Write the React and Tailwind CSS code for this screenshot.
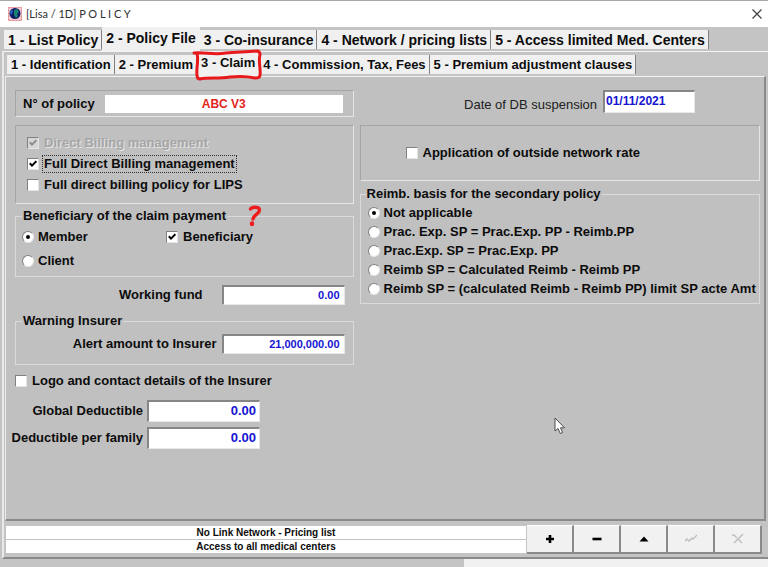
import React from "react";

const mainTabs = [
  "1 - List Policy",
  "2 - Policy File",
  "3 - Co-insurance",
  "4 - Network / pricing lists",
  "5 - Access limited Med. Centers",
];

const subTabs = [
  "1 - Identification",
  "2 - Premium",
  "3 - Claim",
  "4 - Commission, Tax, Fees",
  "5 - Premium adjustment clauses",
];

const secondaryBasis = [
  "Not applicable",
  "Prac. Exp. SP = Prac.Exp. PP - Reimb.PP",
  "Prac.Exp. SP = Prac.Exp. PP",
  "Reimb SP = Calculated Reimb - Reimb PP",
  "Reimb SP = (calculated Reimb - Reimb PP) limit SP acte Amt",
];

function Tab({ label, active, size, children }) {
  return (
    <button
      type="button"
      role="tab"
      aria-selected={active}
      className={`relative flex shrink-0 justify-center whitespace-nowrap bg-[#f0f0f0] px-1 font-bold ${size} ${
        active ? "h-6 items-start pt-[3px]" : "mb-[2px] h-[19px] items-center border-r border-[#808080] pr-[3px]"
      }`}
    >
      {label}
      {children}
    </button>
  );
}

function CheckBox({ label, defaultChecked, disabled, focused }) {
  return (
    <label
      className={`flex w-fit items-center gap-1 whitespace-nowrap ${
        disabled ? "text-[#a6a6a6] [text-shadow:1px_1px_0_#e6e6e6]" : ""
      }`}
    >
      <span className="grid shrink-0 place-items-center">
        <input
          type="checkbox"
          defaultChecked={defaultChecked}
          disabled={disabled}
          className="peer col-start-1 row-start-1 size-3 appearance-none border border-t-[#808080] border-r-[#e4e4e4] border-b-[#e4e4e4] border-l-[#808080] bg-white disabled:bg-[#d6d6d6]"
        />
        <svg
          viewBox="0 0 8 8"
          className="pointer-events-none invisible col-start-1 row-start-1 size-2 peer-checked:visible"
          fill="none"
          stroke={disabled ? "#8c8c8c" : "#000"}
          strokeWidth="2"
        >
          <path d="M0.8 3.2 L3 5.6 L7.4 1.2" />
        </svg>
      </span>
      <span className={focused ? "px-px outline outline-dotted outline-[#303030]" : "px-px"}>{label}</span>
    </label>
  );
}

function Radio({ label, name, defaultChecked }) {
  return (
    <label className="flex w-fit items-center gap-1 whitespace-nowrap">
      <span className="grid shrink-0 place-items-center">
        <input
          type="radio"
          name={name}
          defaultChecked={defaultChecked}
          className="peer col-start-1 row-start-1 size-3 appearance-none rounded-full border border-t-[#808080] border-r-[#e8e8e8] border-b-[#e8e8e8] border-l-[#808080] bg-white"
        />
        <span className="pointer-events-none invisible col-start-1 row-start-1 size-1 rounded-full bg-black peer-checked:visible" />
      </span>
      <span>{label}</span>
    </label>
  );
}

const field =
  "border-t-2 border-l-2 border-r border-b border-t-[#868686] border-l-[#868686] border-r-[#e8e8e8] border-b-[#e8e8e8] bg-white font-bold text-[#1414d2] outline-none";
const box = "border border-t-[#a4a4a4] border-l-[#a4a4a4] border-r-[#e6e6e6] border-b-[#e6e6e6]";
const group = "min-w-0 border border-[#dadada]";

function ToolButton({ label, disabled, children }) {
  return (
    <button
      type="button"
      aria-label={label}
      disabled={disabled}
      className="flex h-[29px] w-[47px] items-center justify-center border-t border-r-2 border-b-2 border-t-white border-r-[#8a8a8a] border-b-[#8a8a8a] bg-[#f1f1f1]"
    >
      <svg viewBox="0 0 14 14" className="size-[14px]" fill="none">
        {children}
      </svg>
    </button>
  );
}

export default function App() {
  return (
    <div className="flex min-h-screen flex-col overflow-x-hidden bg-[#c4c4c4] font-['Liberation_Sans',Arial,sans-serif] text-[13px] font-bold leading-4 text-[#0c0c0c]">
      <header className="flex h-[27px] items-center border-t border-[#a8a8a8] bg-white pr-[5px] pl-2">
        <svg viewBox="0 0 14 14" className="size-[14px]">
          <rect width="14" height="14" fill="#f1c9cd" />
          <rect x="0.5" y="0.5" width="13" height="13" fill="none" stroke="#df8790" strokeDasharray="2 1" />
          <circle cx="7" cy="6.5" r="5.5" fill="#101b68" />
          <path d="M6 3 L9 2 L11 5 L9 7 L10 9 L8 11 L6 8 Z" fill="#16866f" />
          <path d="M2 5 L4 2 L5 5 L3 8 Z" fill="#2563c4" />
        </svg>
        <h1 className="ml-1 flex-1 whitespace-pre font-['Lato','Open_Sans',sans-serif] text-[11px] font-normal text-[#303030]">
          [Lisa / 1D] P O L I C Y
        </h1>
        <button type="button" aria-label="Close">
          <svg viewBox="0 0 12 12" className="size-3" stroke="#404040" strokeWidth="1.2">
            <path d="M1.5 1.5 L10.5 10.5 M10.5 1.5 L1.5 10.5" />
          </svg>
        </button>
      </header>

      <div role="tablist" aria-label="Policy" className="flex h-6 items-end pl-1">
        {mainTabs.map((t, i) => (
          <Tab key={t} label={t} active={i === 1} size="text-[14px]" />
        ))}
      </div>

      <main className="ml-[2px] flex flex-1 flex-col border-t border-b-2 border-l-2 border-t-[#f4f4f4] border-b-[#8a8a8a] border-l-[#e8e8e8]">
        <div role="tablist" aria-label="Policy file" className="flex h-6 items-end pl-[3px]">
          {subTabs.map((t, i) => (
            <Tab key={t} label={t} active={i === 2} size="text-[13px]">
              {i === 2 && (
                <svg
                  viewBox="0 0 72 32"
                  className="pointer-events-none absolute -top-[3px] -left-[5px] z-10 h-8 w-[72px]"
                  fill="none"
                  stroke="#e8191c"
                  strokeWidth="3"
                  strokeLinejoin="round"
                  strokeLinecap="round"
                >
                  <path d="M2 4 C12 3 22 6 34 4 C46 3 56 3 65 2 Q68 2 68 6 C66 12 69 20 68 26 Q68 29 63 29 C54 27 48 27 38 28 C26 30 16 28 8 30 Q5 30 5 26 C4 20 7 10 5 5" />
                </svg>
              )}
            </Tab>
          ))}
        </div>

        <div className="relative mr-[2px] ml-px flex-1 border-t border-r-2 border-b-2 border-l border-t-[#f4f4f4] border-r-[#8a8a8a] border-b-[#8a8a8a] border-l-[#e8e8e8] bg-[#c0c0c0] pt-[13px] pr-1 pb-4 pl-[9px]">
          <div className="grid grid-cols-[339fr_401fr] items-start gap-[6px]">
            <section>
              <div className={`${box} flex h-[27px] items-center pr-[10px] pl-[7px]`}>
                <label htmlFor="policy" className="w-[82px] whitespace-nowrap">
                  N° of policy
                </label>
                <input
                  id="policy"
                  defaultValue="ABC V3"
                  className="h-[18px] min-w-0 flex-1 bg-white text-center text-[12px] font-bold text-[#e2261c] outline-none"
                />
              </div>

              <div className={`${box} mt-2 grid auto-rows-[21px] items-center pt-[6px] pb-2 pl-[11px]`}>
                <CheckBox label="Direct Billing management" defaultChecked disabled />
                <CheckBox label="Full Direct Billing management" defaultChecked focused />
                <CheckBox label="Full direct billing policy for LIPS" />
              </div>

              <fieldset className={`${group} relative mt-1 pt-px pb-[3px] pl-[6px]`}>
                <legend className="bg-[#c0c0c0] px-px leading-4">Beneficiary of the claim payment</legend>
                <div className="grid auto-rows-[24px] grid-cols-[144px_1fr] items-center">
                  <Radio name="payee" label="Member" defaultChecked />
                  <CheckBox label="Beneficiary" defaultChecked />
                  <Radio name="payee" label="Client" />
                </div>
                <svg
                  viewBox="0 0 14 22"
                  className="pointer-events-none absolute -top-[19px] left-[232px] h-[22px] w-[14px]"
                  fill="none"
                  stroke="#ee1c1c"
                  strokeWidth="3.4"
                  strokeLinecap="round"
                  strokeLinejoin="round"
                >
                  <path d="M2.5 4 C4 1.5 11.5 1.5 11.5 5 C11.5 9 6 9 5 14" />
                  <path d="M4 18.5 L4 19" strokeWidth="4.4" />
                </svg>
              </fieldset>

              <div className="mt-2 flex h-5 items-center justify-end pr-[9px]">
                <label htmlFor="fund" className="mr-[19px]">
                  Working fund
                </label>
                <input id="fund" defaultValue="0.00" className={`${field} h-5 w-[123px] pr-1 pb-[2px] text-right text-[11px]`} />
              </div>

              <fieldset className={`${group} mt-2 pt-[5px] pb-[10px]`}>
                <legend className="ml-[6px] bg-[#c0c0c0] px-px leading-4">Warning Insurer</legend>
                <div className="flex h-5 items-center justify-end pr-2">
                  <label htmlFor="alert" className="mr-[5px]">
                    Alert amount to Insurer
                  </label>
                  <input
                    id="alert"
                    defaultValue="21,000,000.00"
                    className={`${field} h-5 w-[123px] pr-1 pb-[2px] text-right text-[11px]`}
                  />
                </div>
              </fieldset>

              <div className="mt-2">
                <CheckBox label="Logo and contact details of the Insurer" />
              </div>

              <div className="mt-[11px] -ml-1 grid grid-cols-[132px_113px] items-center gap-x-1 gap-y-[5px]">
                <label htmlFor="global" className="justify-self-end whitespace-nowrap">
                  Global Deductible
                </label>
                <input
                  id="global"
                  defaultValue="0.00"
                  className={`${field} h-[22px] w-full pr-[3px] pb-[2px] text-right`}
                />
                <label htmlFor="family" className="justify-self-end whitespace-nowrap">
                  Deductible per family
                </label>
                <input
                  id="family"
                  defaultValue="0.00"
                  className={`${field} h-[22px] w-full pr-[3px] pb-[2px] text-right`}
                />
              </div>
            </section>

            <section>
              <div className="flex h-[27px] items-start justify-end pr-[65px]">
                <label htmlFor="suspension" className="mr-[6px] pt-[7px] font-normal text-[#202020]">
                  Date of DB suspension
                </label>
                <input
                  id="suspension"
                  defaultValue="01/11/2021"
                  className={`${field} h-[23px] w-[92px] pb-[2px] pl-px text-[12px]`}
                />
              </div>

              <div className={`${box} mt-2 flex h-14 items-center pl-[45px]`}>
                <CheckBox label="Application of outside network rate" />
              </div>

              <fieldset className={`${group} mt-[5px] pt-px pb-[5px] pl-[7px]`}>
                <legend className="-ml-[2px] bg-[#c0c0c0] px-px leading-4">
                  Reimb. basis for the secondary policy
                </legend>
                <div className="grid auto-rows-[19px] items-center">
                  {secondaryBasis.map((t, i) => (
                    <Radio key={t} name="basis" label={t} defaultChecked={i === 0} />
                  ))}
                </div>
              </fieldset>
            </section>
          </div>

          <svg
            viewBox="0 0 12 18"
            className="pointer-events-none absolute top-[340px] left-[548px] h-[18px] w-3"
            fill="#fff"
            stroke="#4a4a4a"
            strokeLinejoin="round"
          >
            <path d="M1 1 V14 L4 11.5 L6.3 16.5 L8.6 15.5 L6.5 10.8 H10.5 Z" />
          </svg>
        </div>

        <footer className="flex items-center pt-1 pr-[6px] pb-[3px] pl-[2px]">
          <div className="grid flex-1 gap-px text-center text-[10px] leading-[13px]">
            <p className="bg-white">No Link Network - Pricing list</p>
            <p className="bg-white">Access to all medical centers</p>
          </div>
          <div className="ml-px flex">
            <ToolButton label="Add">
              <path d="M7 3 V11 M3 7 H11" stroke="#000" strokeWidth="2.6" />
            </ToolButton>
            <ToolButton label="Remove">
              <path d="M2.5 7 H11.5" stroke="#000" strokeWidth="2.6" />
            </ToolButton>
            <ToolButton label="Edit">
              <path d="M2.5 9.5 L7 4.5 L11.5 9.5 Z" fill="#000" />
            </ToolButton>
            <ToolButton label="Validate" disabled>
              <path d="M1 9 L3 7 L5 9 L8 6 L9 7 L13 3" stroke="#bdbdbd" strokeWidth="1.3" />
            </ToolButton>
            <ToolButton label="Cancel" disabled>
              <path d="M3 3 L6 6 M12 2 L3 11 M7 7 L11 11 M2 2 V4" stroke="#bdbdbd" strokeWidth="1.4" />
            </ToolButton>
          </div>
        </footer>
      </main>

      <div className="flex h-2 pl-[464px]">
        <div className="flex-1 bg-[#f0f0f0]" />
      </div>
    </div>
  );
}
